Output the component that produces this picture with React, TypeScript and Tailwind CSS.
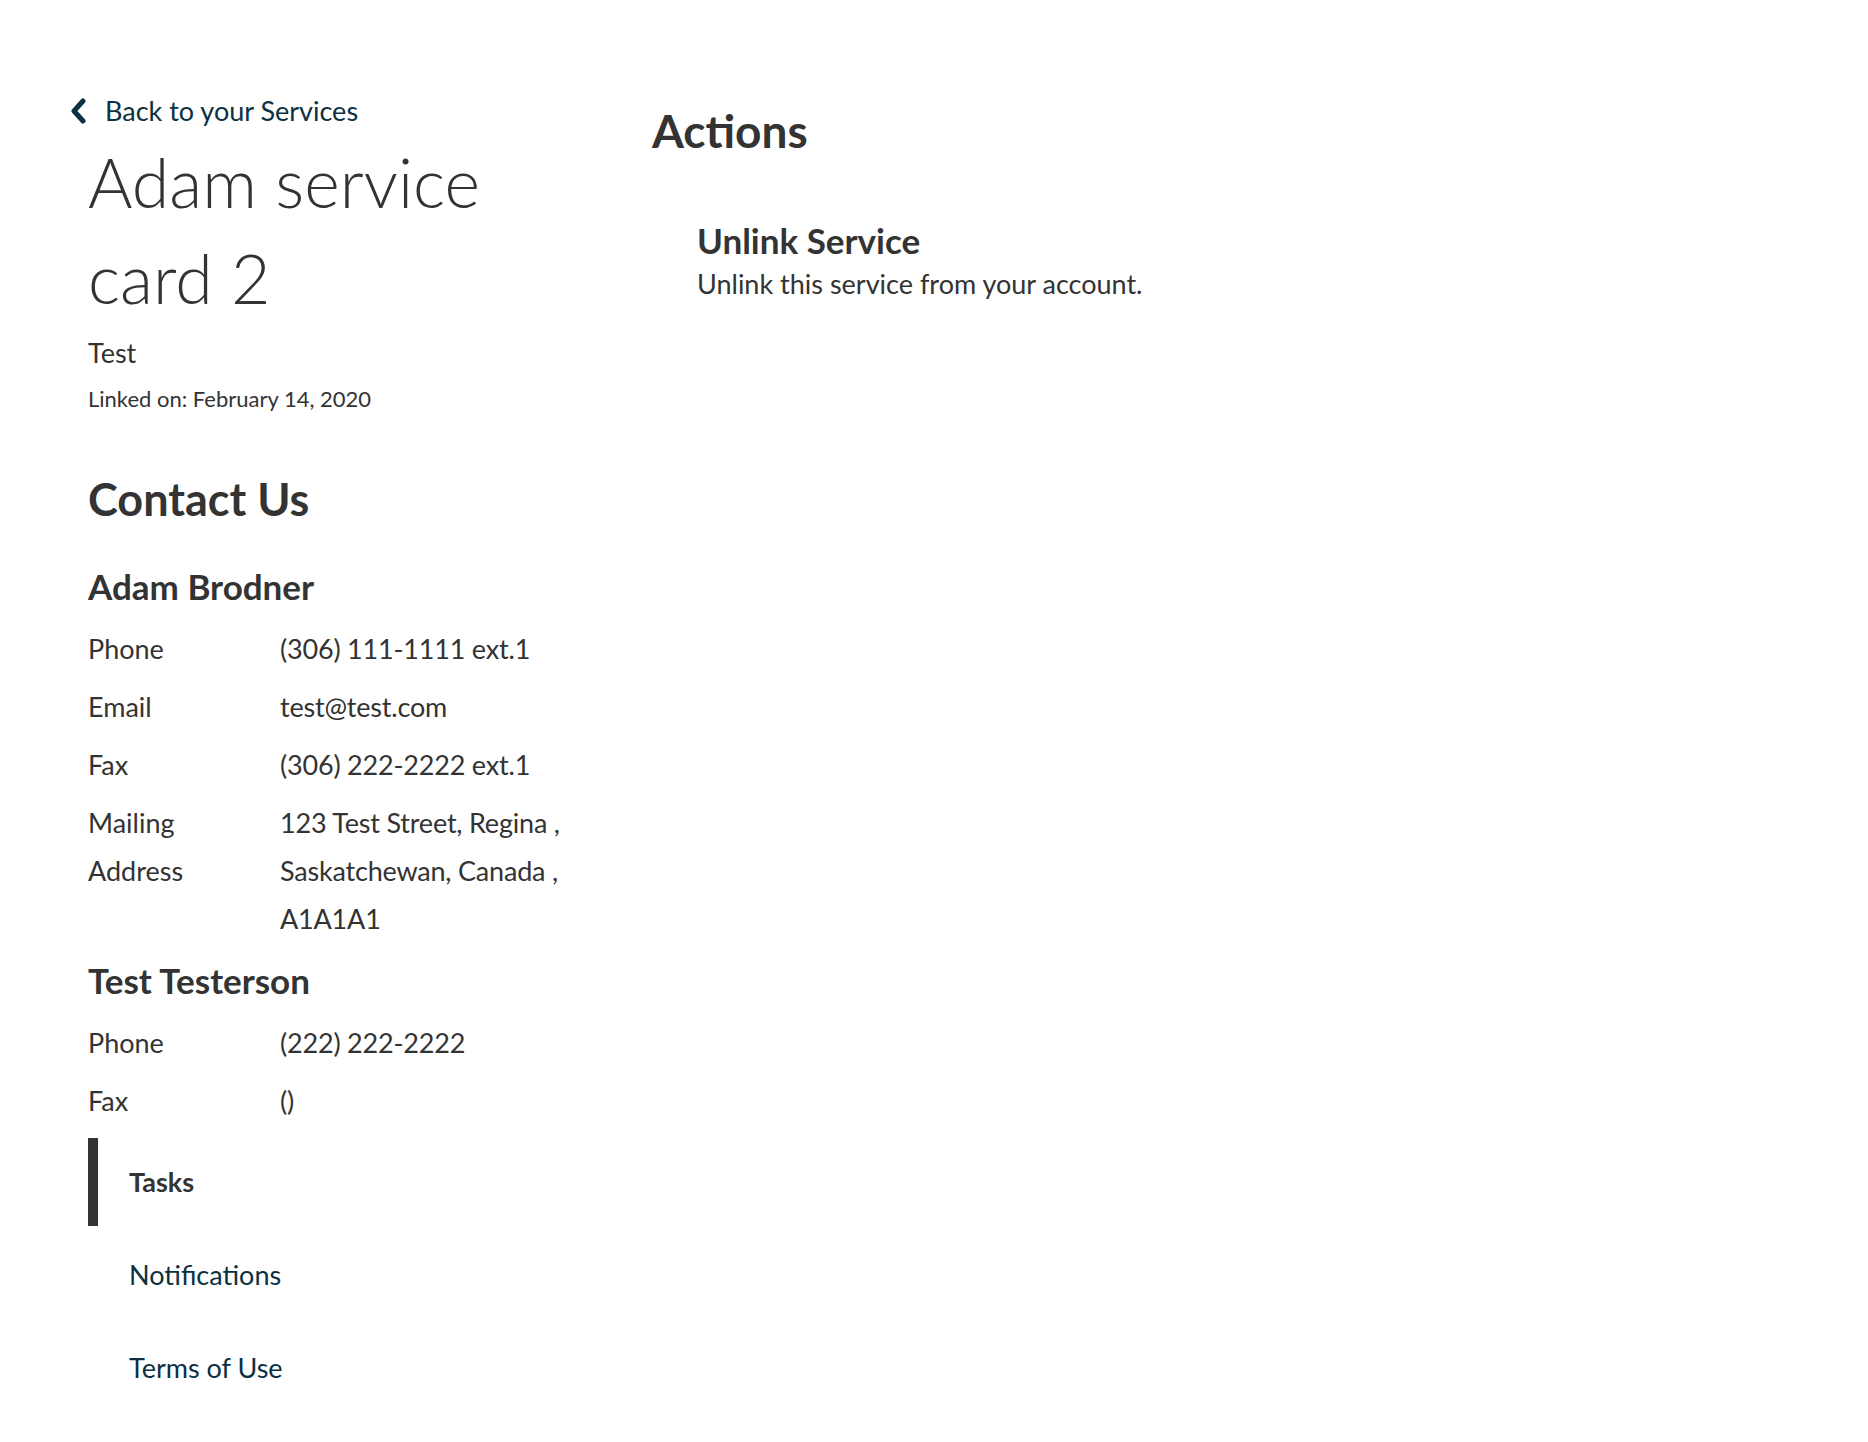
import React from "react";

const font = "font-['Lato','Liberation_Sans',sans-serif]";

function Row({ label, children }: { label: React.ReactNode; children: React.ReactNode }) {
  return (
    <div className="flex text-[27px] leading-[48px] text-[#333333]">
      <div className="w-[192px] shrink-0">{label}</div>
      <div className="tracking-[-0.2px]">{children}</div>
    </div>
  );
}

export default function App() {
  return (
    <div className={`${font} min-h-[1442px] bg-white text-[#333333]`}>
      <div className="flex pl-[88px]">
        {/* Left column */}
        <div className="w-[564px] shrink-0 pt-[93px]">
          <a className="-ml-[19px] flex items-center gap-[18px] text-[27px] leading-[36px] text-[#0b3142]" href="#">
            <svg width="18" height="26" viewBox="0 0 18 26" className="shrink-0">
              <polyline points="14,3 5,13 14,23" fill="none" stroke="#0b3142" strokeWidth="5" strokeLinecap="round" strokeLinejoin="round" />
            </svg>
            <span>Back to your Services</span>
          </a>
          <h1 className="mt-[5px] max-w-[460px] text-[68px] font-light leading-[96px] text-[#333333]">
            Adam service card 2
          </h1>
          <p className="mt-[9px] text-[27px] leading-[36px]">Test</p>
          <p className="mt-[12px] text-[22px] leading-[32px]">Linked on: February 14, 2020</p>

          <h2 className="mt-[54px] text-[45px] font-bold leading-[60px]">Contact Us</h2>

          <h3 className="mt-[33px] text-[35px] font-bold leading-[48px]">Adam Brodner</h3>
          <div className="mt-[15px] flex flex-col gap-[10px]">
            <Row label="Phone">(306) 111-1111 ext.1</Row>
            <Row label="Email">test@test.com</Row>
            <Row label="Fax">(306) 222-2222 ext.1</Row>
            <Row
              label={
                <>
                  <span className="block">Mailing</span>
                  <span className="block">Address</span>
                </>
              }
            >
              <span className="block">123 Test Street, Regina ,</span>
              <span className="block">Saskatchewan, Canada ,</span>
              <span className="block">A1A1A1</span>
            </Row>
          </div>

          <h3 className="mt-[13px] text-[35px] font-bold leading-[48px]">Test Testerson</h3>
          <div className="mt-[15px] flex flex-col gap-[10px]">
            <Row label="Phone">(222) 222-2222</Row>
            <Row label="Fax">()</Row>
          </div>

          <nav className="mt-[13px] flex flex-col gap-[5px] pb-[40px]">
            <div className="flex h-[88px] items-center border-l-[10px] border-[#333333] pl-[31px] text-[27px] font-bold">
              Tasks
            </div>
            <a href="#" className="flex h-[88px] items-center pl-[41px] text-[27px] text-[#0b3142]">
              Notifications
            </a>
            <a href="#" className="flex h-[88px] items-center pl-[41px] text-[27px] text-[#0b3142]">
              Terms of Use
            </a>
          </nav>
        </div>

        {/* Right column */}
        <div className="pt-[101px]">
          <h2 className="text-[46px] font-bold leading-[60px]">Actions</h2>
          <div className="mt-[55px] pl-[45px]">
            <h3 className="text-[35px] font-bold leading-[48px]">Unlink Service</h3>
            <p className="text-[27px] leading-[40px]">Unlink this service from your account.</p>
          </div>
        </div>
      </div>
    </div>
  );
}
